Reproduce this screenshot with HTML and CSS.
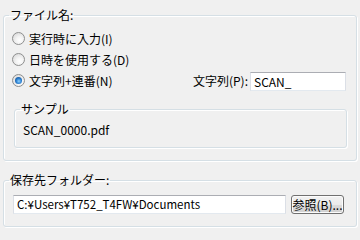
FILE: index.html
```html
<!DOCTYPE html>
<html lang="ja">
<head>
<meta charset="utf-8">
<link rel="stylesheet" href="styles.css">
</head>
<body>
<div class="panel">
  <fieldset class="group group-name">
    <legend>ファイル名:</legend>
    <div class="row">
      <span class="radio"></span><span class="label">実行時に入力(I)</span>
    </div>
    <div class="row">
      <span class="radio"></span><span class="label">日時を使用する(D)</span>
    </div>
    <div class="row">
      <span class="radio checked"></span><span class="label">文字列+連番(N)</span>
      <div class="prefix">
        <span class="prefix-label">文字列(P):</span>
        <div class="textbox small">SCAN_</div>
      </div>
    </div>
    <fieldset class="group sample">
      <legend>サンプル</legend>
      <div class="sample-text">SCAN_0000.pdf</div>
    </fieldset>
  </fieldset>
  <fieldset class="group group-folder">
    <legend>保存先フォルダー:</legend>
    <div class="folder-row">
      <div class="textbox path">C:¥Users¥T752_T4FW¥Documents</div>
      <div class="button">参照(B)...</div>
    </div>
  </fieldset>
</div>
</body>
</html>
```
FILE: styles.css
```css
html, body {
  margin: 0;
  padding: 0;
  background: #f0f0f0;
}
body {
  width: 360px;
  height: 228px;
  overflow: hidden;
  font-family: "Noto Sans CJK JP", "Noto Sans", sans-serif;
  font-size: 12px;
  color: #000;
}
.panel {
  padding: 0 3px;
}
.group {
  margin: 0;
  padding: 0;
  border: 1px solid #d5dfe5;
  border-radius: 3px;
  box-shadow: inset 1px 1px 0 #fff, 1px 1px 0 #fff;
  min-width: 0;
}
.group legend {
  margin-left: 5px;
  padding: 0 1px;
  height: 16px;
  line-height: 16px;
}
.group-name {
  margin-top: 7px;
  padding: 5px 0 12px;
}
.row {
  display: flex;
  align-items: center;
  height: 21px;
  padding-left: 8px;
}
.radio {
  position: relative;
  width: 11px;
  height: 11px;
  border-radius: 50%;
  border: 1px solid #8e8f8f;
  background: radial-gradient(circle at 60% 65%, #ffffff 0, #f4f4f4 35%, #d2d2d2 100%);
  flex: none;
}
.radio.checked::after {
  content: "";
  position: absolute;
  left: 2px;
  top: 2px;
  width: 7px;
  height: 7px;
  border-radius: 50%;
  background: radial-gradient(circle at 55% 60%, #8fd3ff 0, #2b7fd0 45%, #0d3f7a 100%);
}
.label {
  margin-left: 4px;
  line-height: 21px;
}
.prefix {
  margin-left: auto;
  margin-right: 10px;
  display: flex;
  align-items: center;
  gap: 2px;
}
.textbox {
  box-sizing: border-box;
  background: #fff;
  border: 1px solid #e2e3ea;
  border-top-color: #abadb3;
  border-left-color: #dbdfe6;
  border-right-color: #dbdfe6;
  border-bottom-color: #e3e9ef;
  padding-left: 3px;
  white-space: nowrap;
  overflow: hidden;
}
.textbox.small {
  width: 96px;
  height: 19px;
  line-height: 17px;
  margin-top: 2px;
}
.sample {
  margin: 10px 9px 0 10px;
  padding: 3px 0 7px;
}
.sample-text {
  padding-left: 8px;
  line-height: 20px;
}
.group-folder {
  margin-top: 11px;
  padding: 7px 0 12px;
}
.folder-row {
  display: flex;
  align-items: center;
  gap: 5px;
  padding: 0 12px 0 9px;
}
.textbox.path {
  flex: 1;
  height: 19px;
  line-height: 17px;
  font-size: 11.5px;
}
.button {
  box-sizing: border-box;
  width: 53px;
  height: 19px;
  line-height: 17px;
  text-align: center;
  border: 1px solid #707070;
  border-radius: 3px;
  background: linear-gradient(#f2f2f2 0, #ebebeb 50%, #dddddd 50%, #cfcfcf 100%);
  box-shadow: inset 0 0 0 1px #fcfcfc;
  white-space: nowrap;
}
```
